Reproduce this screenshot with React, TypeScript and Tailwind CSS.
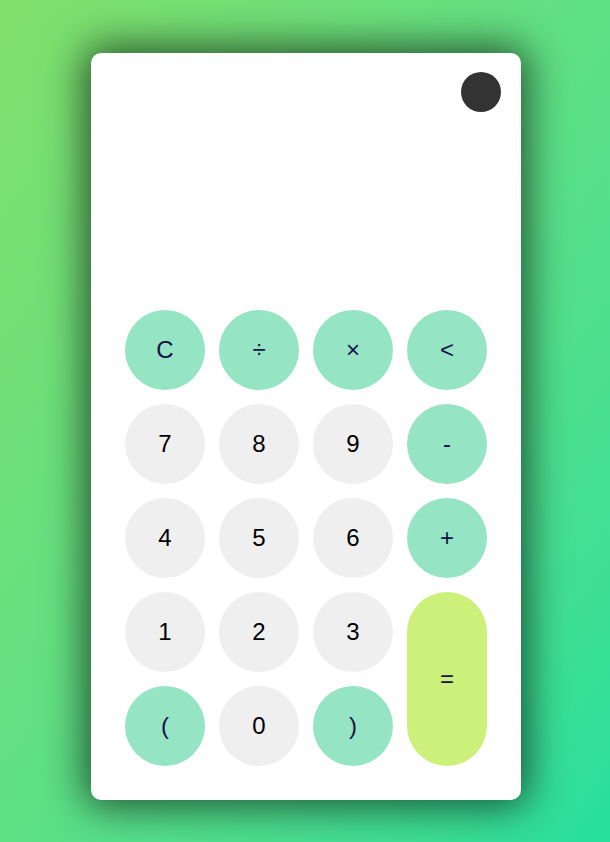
import React from "react";

type Key = { label: string; kind: "op" | "num" | "eq" };

const keys: Key[] = [
  { label: "C", kind: "op" },
  { label: "÷", kind: "op" },
  { label: "×", kind: "op" },
  { label: "<", kind: "op" },
  { label: "7", kind: "num" },
  { label: "8", kind: "num" },
  { label: "9", kind: "num" },
  { label: "-", kind: "op" },
  { label: "4", kind: "num" },
  { label: "5", kind: "num" },
  { label: "6", kind: "num" },
  { label: "+", kind: "op" },
  { label: "1", kind: "num" },
  { label: "2", kind: "num" },
  { label: "3", kind: "num" },
  { label: "=", kind: "eq" },
  { label: "(", kind: "op" },
  { label: "0", kind: "num" },
  { label: ")", kind: "op" },
];

const KeyButton = ({ k }: { k: Key }) => {
  if (k.kind === "eq") {
    return (
      <button className="row-span-2 w-20 h-full rounded-full bg-[#cdf07b] text-[#14124b] text-2xl flex items-center justify-center">
        {k.label}
      </button>
    );
  }
  const color =
    k.kind === "op" ? "bg-[#95e4c4] text-[#14124b]" : "bg-[#efefef] text-black";
  return (
    <button className={`w-20 h-20 rounded-full text-2xl flex items-center justify-center ${color}`}>
      {k.label}
    </button>
  );
};

export default function App() {
  return (
    <div
      className="w-full h-[842px] flex justify-center pt-[53px] pl-[2px] bg-gradient-to-br from-[#80e06a] to-[#25df9c]"
      style={{ fontFamily: '"Liberation Sans", Arial, sans-serif' }}
    >
      <div className="w-[430px] h-[747px] bg-white rounded-[10px] flex flex-col shadow-[0_0_40px_6px_rgba(0,0,0,0.65)]">
        {/* display area */}
        <div className="flex-1 flex justify-end items-start pt-[19px] pr-5">
          <div className="w-10 h-10 rounded-full bg-[#333333]" />
        </div>
        {/* keypad */}
        <div className="grid grid-cols-4 grid-rows-5 gap-[14px] p-[34px] pt-0">
          {keys.map((k) => (
            <KeyButton key={k.label} k={k} />
          ))}
        </div>
      </div>
    </div>
  );
}
